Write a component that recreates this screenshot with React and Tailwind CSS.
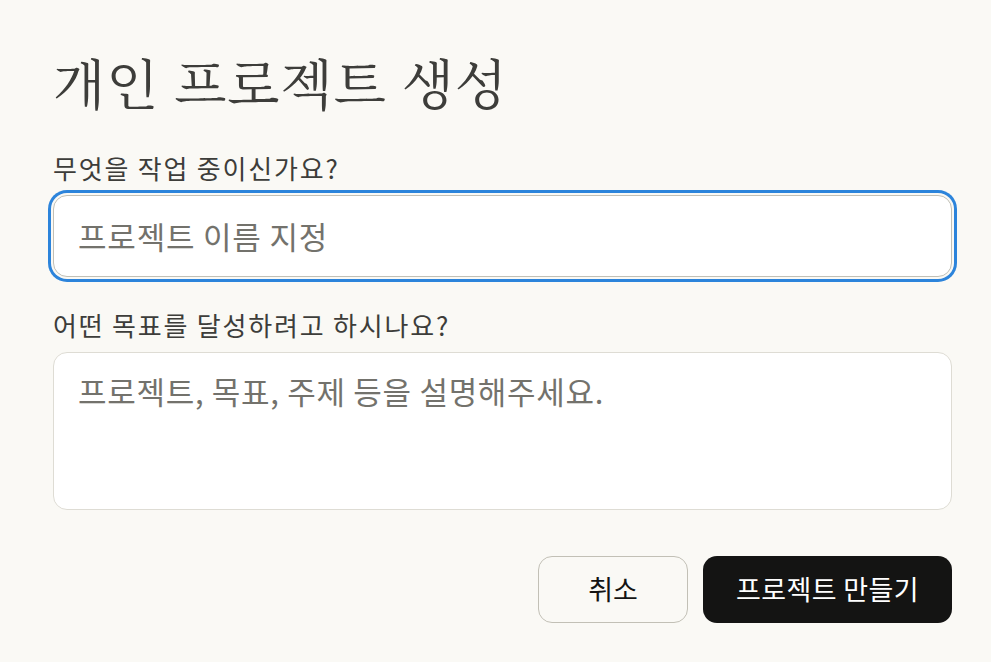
import React from 'react';

const sans = { fontFamily: '"Noto Sans CJK KR", "Noto Sans", sans-serif' };

export default function App() {
  return (
    <div className="min-h-screen bg-[#faf9f5] text-[#3d3d3a]" style={sans}>
      <div className="ml-[53px] w-[899px] pt-[44px]">
        {/* Title */}
        <h1
          className="text-[54px] leading-[76px] font-normal text-[#3d3d3a] tracking-[1px]"
          style={{ fontFamily: '"Noto Serif CJK KR", "Noto Serif KR", "Noto Sans CJK KR", serif' }}
        >
          개인 프로젝트 생성
        </h1>

        <label className="block mt-[31px] text-[26px] leading-[34px] tracking-[1.8px] text-[#3d3d3a]">
          무엇을 작업 중이신가요?
        </label>
        <div className="mt-[10px] h-[82px] rounded-[14px] border border-[#c2c0b6] bg-white ring-[3px] ring-[#2c84db] ring-offset-[2px] ring-offset-[#faf9f5] flex items-center px-[24px]">
          <span className="text-[31px] tracking-[0.8px] text-[#73726c]">프로젝트 이름 지정</span>
        </div>

        <label className="block mt-[31px] text-[26px] leading-[34px] tracking-[1.8px] text-[#3d3d3a]">
          어떤 목표를 달성하려고 하시나요?
        </label>
        <div className="mt-[10px] h-[158px] rounded-[14px] border border-[#dedcd4] bg-white px-[24px] pt-[18px]">
          <span className="text-[31px] leading-[40px] tracking-[0.7px] text-[#73726c]">
            프로젝트, 목표, 주제 등을 설명해주세요.
          </span>
        </div>

        {/* Actions */}
        <div className="mt-[46px] flex justify-end gap-[15px]">
          <button className="w-[150px] h-[67px] rounded-[14px] border border-[#c2c0b6] bg-[#faf9f5] text-[27px] text-[#141413]">
            취소
          </button>
          <button className="w-[249px] h-[67px] rounded-[14px] bg-[#141413] text-[27px] tracking-[0.4px] text-white">
            프로젝트 만들기
          </button>
        </div>
      </div>
    </div>
  );
}
